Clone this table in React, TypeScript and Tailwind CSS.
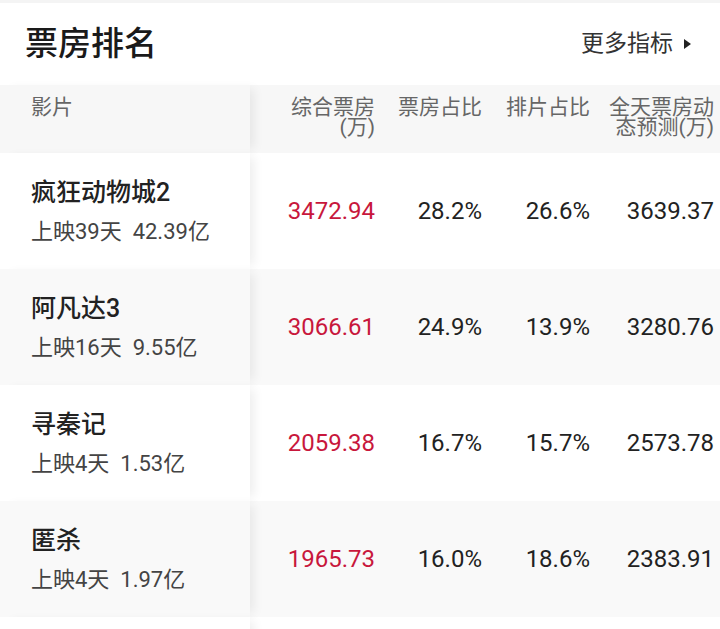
const FONT = "font-['Roboto','Noto_Sans_CJK_SC',sans-serif]";

type Film = { name: string; sub: string; gross: string; share: string; shows: string; forecast: string };

const FILMS: Film[] = [
  { name: '疯狂动物城2', sub: '上映39天  42.39亿', gross: '3472.94', share: '28.2%', shows: '26.6%', forecast: '3639.37' },
  { name: '阿凡达3', sub: '上映16天  9.55亿', gross: '3066.61', share: '24.9%', shows: '13.9%', forecast: '3280.76' },
  { name: '寻秦记', sub: '上映4天  1.53亿', gross: '2059.38', share: '16.7%', shows: '15.7%', forecast: '2573.78' },
  { name: '匿杀', sub: '上映4天  1.97亿', gross: '1965.73', share: '16.0%', shows: '18.6%', forecast: '2383.91' },
];

const stickyShadow = 'relative z-10 shadow-[8px_0_10px_-4px_rgba(0,0,0,0.07)]';

function Row({ film, odd }: { film?: Film; odd: boolean }) {
  const bg = odd ? 'bg-[#f9f9f9]' : 'bg-white';
  return (
    <div className={`flex h-[116px] shrink-0 ${bg}`}>
      <div className={`w-[250px] shrink-0 pl-[31px] pt-[24px] ${bg} ${stickyShadow}`}>
        {film && (
          <>
            <p className="text-[25px] leading-[32px] font-medium text-[#222]">{film.name}</p>
            <p className="mt-[10px] whitespace-pre text-[22px] leading-[26px] text-[#444]">{film.sub}</p>
          </>
        )}
      </div>
      {film && (
        <div className="flex flex-1 items-center pr-[6px] text-[24px] leading-[30px]">
          <span className="w-[125px] text-right text-[#c8173c]">{film.gross}</span>
          <span className="w-[107px] text-right text-[#222]">{film.share}</span>
          <span className="w-[108px] text-right text-[#222]">{film.shows}</span>
          <span className="flex-1 text-right text-[#222]">{film.forecast}</span>
        </div>
      )}
    </div>
  );
}

export default function App() {
  return (
    <div className={`flex h-[629px] w-[720px] flex-col overflow-hidden bg-white ${FONT}`}>
      <div className="h-[3px] shrink-0 bg-[#f4f4f4]" />
      <div className="flex h-[82px] shrink-0 items-center justify-between pl-[25px] pr-[29px]">
        <h1 className="text-[33px] leading-[40px] font-medium text-[#1a1a1a]">票房排名</h1>
        <button className="flex items-center gap-[11px] text-[23px] text-[#333]">
          更多指标
          <svg width="7" height="10" viewBox="0 0 7 10">
            <path d="M0 0 L7 5 L0 10 Z" fill="#222" />
          </svg>
        </button>
      </div>

      <div className="flex h-[68px] shrink-0 bg-[#f7f7f7] text-[21px] leading-[20px] text-[#666]">
        <div className={`w-[250px] shrink-0 bg-[#f7f7f7] pl-[31px] pt-[12px] ${stickyShadow}`}>影片</div>
        <div className="flex flex-1 items-start pr-[6px] pt-[12px]">
          <span className="w-[125px] pl-[18px] text-right">综合票房(万)</span>
          <span className="w-[107px] pl-[12px] text-right">票房占比</span>
          <span className="w-[108px] pl-[12px] text-right">排片占比</span>
          <span className="flex-1 pl-[12px] text-right">全天票房动态预测(万)</span>
        </div>
      </div>

      {FILMS.map((f, i) => (
        <Row key={f.name} film={f} odd={i % 2 === 1} />
      ))}
      <Row odd={false} />
    </div>
  );
}
